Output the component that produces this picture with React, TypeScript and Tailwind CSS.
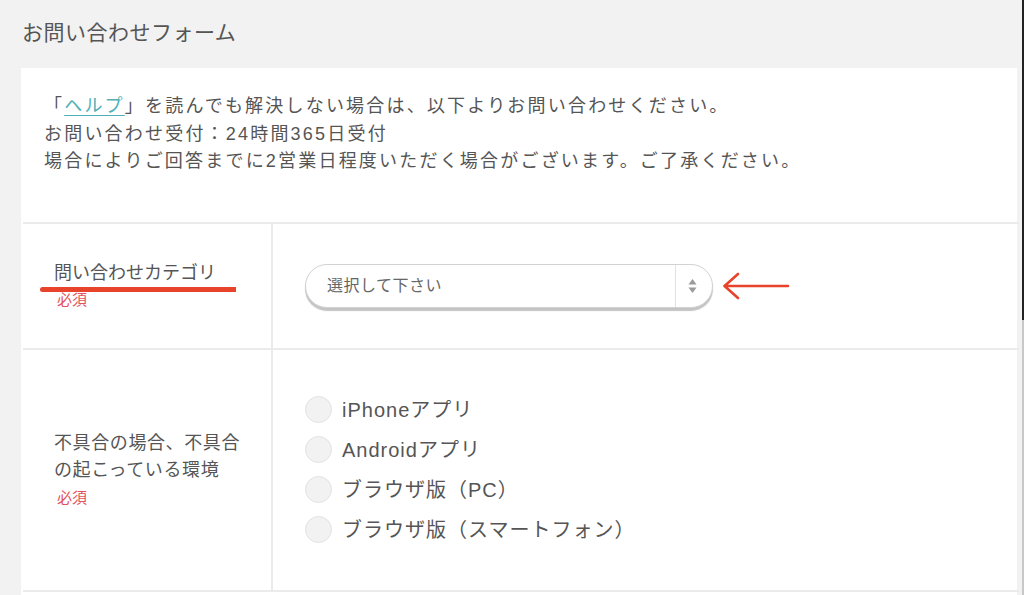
import React from 'react';

const font = "font-['Liberation_Sans','Noto_Sans_CJK_JP',sans-serif]";

const envOptions = ['iPhoneアプリ', 'Androidアプリ', 'ブラウザ版（PC）', 'ブラウザ版（スマートフォン）'];

const Required: React.FC = () => (
  <p className="text-[15px] leading-[22px] text-[#e2525c] pl-[3px] mt-[3px]">必須</p>
);

const App: React.FC = () => {
  return (
    <div className={`w-[1024px] h-[595px] overflow-hidden bg-[#f2f2f2] flex ${font}`}>
      <div className="w-[1022px] pl-[21px] pr-[5px]">
        <h1 className="h-[68px] pt-[19px] pl-[1px] text-[21px] leading-[28px] tracking-[0.5px] text-[#555]">
          お問い合わせフォーム
        </h1>

        <div className="bg-white">
          {/* Intro */}
          <div className="pt-[25px] pb-[46px] pl-[23px] text-[18px] leading-[27.5px] tracking-[2.2px] text-[#555]">
            <p>
              「<a href="#" className="text-[#4fb0b5] underline underline-offset-[3px]">ヘルプ</a>」を読んでも解決しない場合は、以下よりお問い合わせください。
            </p>
            <p>お問い合わせ受付：24時間365日受付</p>
            <p>場合によりご回答までに2営業日程度いただく場合がございます。ご了承ください。</p>
          </div>

          {/* Form table */}
          <div className="ml-[2px] mr-[-2px] border-t-2 border-[#ebebeb]">
            <div className="flex h-[126px] border-b-2 border-[#ebebeb]">
              <div className="w-[250px] border-r-2 border-[#ebebeb] flex items-center pl-[31px]">
                <div className="relative">
                  <p className="text-[18px] leading-[26px] text-[#555]">問い合わせカテゴリ</p>
                  <Required />
                  <div className="absolute left-[-14px] top-[27px] w-[196px] h-[5px] rounded-l-full bg-[#e8432b]" />
                </div>
              </div>
              <div className="flex-1 flex items-center pl-[32px]">
                <div className="w-[408px] h-[44px] rounded-full border border-[#d2d2d2] shadow-[0_3px_1px_#c4c4c4] bg-white flex items-center">
                  <span className="flex-1 pl-[21px] text-[16px] tracking-[0.5px] text-[#666]">選択して下さい</span>
                  <div className="w-[37px] h-full border-l border-[#e2e2e2] flex items-center justify-center pr-[4px]">
                    <svg width="9" height="16" viewBox="0 0 9 16">
                      <path d="M4.5 1 L8.5 6.5 H0.5 Z" fill="#9a9a9a" />
                      <path d="M4.5 15 L8.5 9.5 H0.5 Z" fill="#9a9a9a" />
                    </svg>
                  </div>
                </div>
                <svg className="ml-[9px]" width="68" height="30" viewBox="0 0 68 30">
                  <path d="M66 15 H3 M16 3 L2.5 15 L16 27" fill="none" stroke="#e8432b" strokeWidth="2.6" strokeLinecap="round" strokeLinejoin="round" />
                </svg>
              </div>
            </div>

            <div className="flex h-[242px] border-b-2 border-[#ebebeb]">
              <div className="w-[250px] border-r-2 border-[#ebebeb] flex items-center pl-[31px] pr-[26px]">
                <div>
                  <p className="text-[18px] leading-[27px] tracking-[0.6px] text-[#555]">不具合の場合、不具合の起こっている環境</p>
                  <Required />
                </div>
              </div>
              <div className="flex-1 flex flex-col justify-center pl-[32px]">
                {envOptions.map(opt => (
                  <label key={opt} className="flex items-center h-[40px] gap-[10px] text-[20px] tracking-[1px] text-[#555]">
                    <span className="w-[27px] h-[27px] rounded-full bg-[#f2f2f2] border border-[#e2e2e2]" />
                    {opt}
                  </label>
                ))}
              </div>
            </div>
            <div className="h-[20px]" />
          </div>
        </div>
      </div>
      <div className="w-[2px] flex flex-col">
        <div className="h-[320px] bg-[#222]" />
        <div className="flex-1 bg-[#c8c8c8]" />
      </div>
    </div>
  );
};

export default App;
